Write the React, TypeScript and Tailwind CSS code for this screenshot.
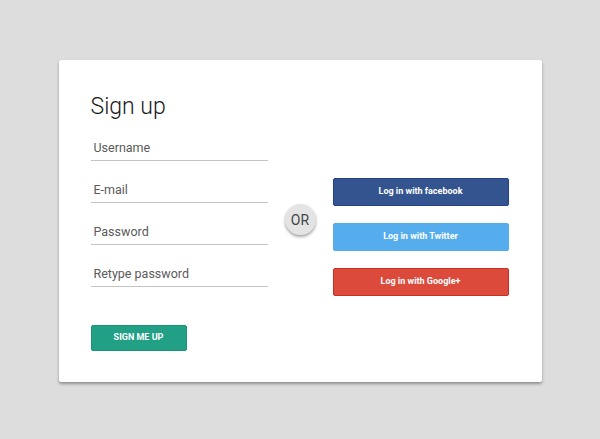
import React from "react";

const font = { fontFamily: "Roboto, 'Noto Sans', sans-serif" };

function Field({ label }: { label: string }) {
  return (
    <div className="flex h-[42px] items-end border-b border-[#c4c4c4] pb-[3px] pl-[3px]">
      <span className="text-[12.5px] leading-[19px] text-[#5a5a5a]">{label}</span>
    </div>
  );
}

function Social({ label, cls }: { label: string; cls: string }) {
  return (
    <button
      className={`flex h-[28px] w-[176px] items-center justify-center rounded-[2px] border text-[9px] font-bold text-white ${cls}`}
    >
      {label}
    </button>
  );
}

export default function App() {
  return (
    <div className="flex h-[439px] w-[600px] justify-center bg-[#dddddd] pt-[60px]" style={font}>
      <div className="h-[322px] w-[483px] rounded-[2px] bg-white pl-[32px] pt-[35px] shadow-[0_2px_3px_rgba(0,0,0,0.35)]">
        <h1 className="text-[23px] font-light leading-[24px] text-[#1a1a1a]">Sign up</h1>
        <div className="flex">
          <div className="flex w-[177px] flex-col">
            <Field label="Username" />
            <Field label="E-mail" />
            <Field label="Password" />
            <Field label="Retype password" />
            <button className="mt-[38px] flex h-[26px] w-[96px] items-center justify-center rounded-[2px] border border-[#1a9479] bg-[#21a085] text-[9px] font-bold uppercase text-white">
              Sign me up
            </button>
          </div>
          <div className="flex w-[65px] justify-center pt-[85px]">
            <div className="flex h-[31px] w-[31px] items-center justify-center rounded-full bg-[#e4e4e4] pt-[1px] text-[14px] text-[#444] shadow-[0_2px_3px_rgba(0,0,0,0.35)]">
              OR
            </div>
          </div>
          <div className="flex flex-col gap-[17px] pt-[59px]">
            <Social label="Log in with facebook" cls="border-[#23408a] bg-[#34548f]" />
            <Social label="Log in with Twitter" cls="border-[#55acee] bg-[#56adee]" />
            <Social label="Log in with Google+" cls="border-[#c7301f] bg-[#dc4a3c]" />
          </div>
        </div>
      </div>
    </div>
  );
}
